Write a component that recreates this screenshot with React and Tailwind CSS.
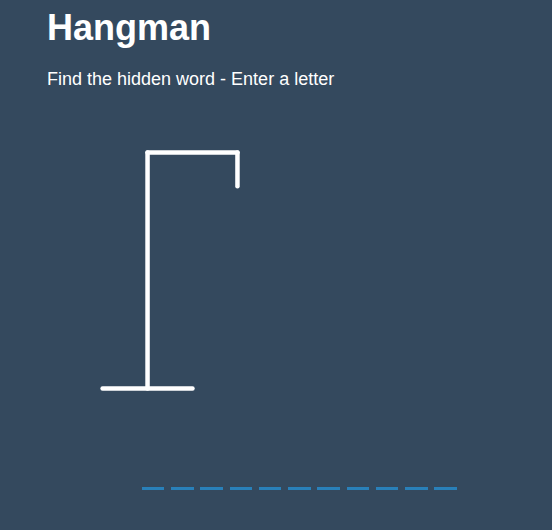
export default function App() {
  const letters = Array.from({ length: 11 })

  return (
    <div className="min-h-[530px] w-full bg-[#34495e] text-white font-['Liberation_Sans',Arial,sans-serif] overflow-hidden">
      <div className="pl-[47px] pt-[8px]">
        <h1 className="text-[36px] font-bold leading-[39px]">Hangman</h1>
        <p className="mt-[22px] text-[18px] leading-[20px]">Find the hidden word - Enter a letter</p>
      </div>

      <div className="pl-[80px] mt-[41px]">
        <svg width="225" height="281" viewBox="0 0 200 250" className="block fill-transparent stroke-white stroke-[4px]" strokeLinecap="round">
          <line x1="60" y1="20" x2="140" y2="20" />
          <line x1="140" y1="20" x2="140" y2="50" />
          <line x1="60" y1="20" x2="60" y2="230" />
          <line x1="20" y1="230" x2="100" y2="230" />
        </svg>
      </div>

      <div className="flex pl-[138.6px] mt-[23px]">
        {letters.map((_, i) => (
          <span key={i} className="mx-[3.375px] h-[56.25px] w-[22.5px] border-b-[3.375px] border-[#2980b9]" />
        ))}
      </div>
    </div>
  )
}
